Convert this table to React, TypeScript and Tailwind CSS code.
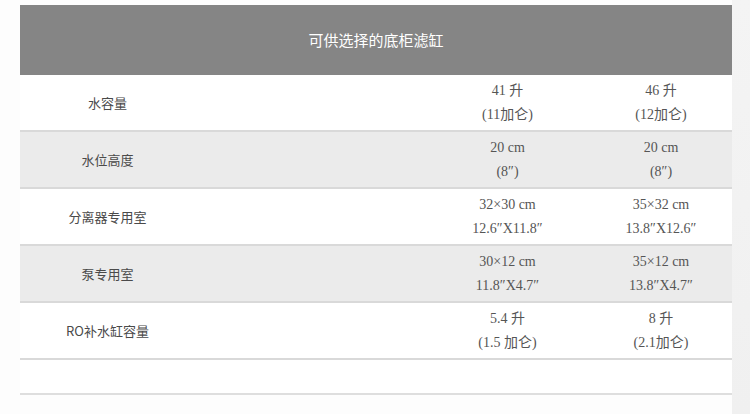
const rows = [
  { label: '水容量', a: ['41 升', '(11加仑)'], b: ['46 升', '(12加仑)'] },
  { label: '水位高度', a: ['20 cm', '(8″)'], b: ['20 cm', '(8″)'] },
  { label: '分离器专用室', a: ['32×30 cm', '12.6″X11.8″'], b: ['35×32 cm', '13.8″X12.6″'] },
  { label: '泵专用室', a: ['30×12 cm', '11.8″X4.7″'], b: ['35×12 cm', '13.8″X4.7″'] },
  { label: 'RO补水缸容量', a: ['5.4 升', '(1.5 加仑)'], b: ['8 升', '(2.1加仑)'] },
]

const serif = "font-['Georgia','Liberation_Serif','Noto_Sans_CJK_SC',serif]"

function Value({ lines }: { lines: string[] }) {
  return (
    <div className={`flex flex-col items-center gap-[5px] text-[14px] leading-[19px] text-[#555] ${serif}`}>
      {lines.map((l) => (
        <span key={l}>{l}</span>
      ))}
    </div>
  )
}

export default function App() {
  return (
    <div className="flex h-[414px] w-[750px] bg-white">
      <div className="w-[732px] bg-[#fdfdfd] pl-5 pt-[5px]">
        <div className="flex h-[70px] items-center justify-center bg-[#858585] font-['Noto_Sans_CJK_SC',sans-serif] text-[15px] text-white">
          可供选择的底柜滤缸
        </div>
        {rows.map((r, i) => (
          <div
            key={r.label}
            className={`grid h-[57px] grid-cols-[175px_230px_165px_142px] items-center border-b-2 border-[#d9d9d9] ${
              i % 2 === 1 ? 'bg-[#ebebeb]' : 'bg-white'
            }`}
          >
            <div className="text-center font-['Noto_Sans_CJK_SC',sans-serif] text-[13px] text-[#4a4a4a]">{r.label}</div>
            <div />
            <Value lines={r.a} />
            <Value lines={r.b} />
          </div>
        ))}
        <div className="h-[35px] border-b-2 border-[#dedede] bg-white" />
      </div>
      <div className="flex-1 bg-gradient-to-b from-[#f4f4f4] to-[#f0f0f0]" />
    </div>
  )
}
